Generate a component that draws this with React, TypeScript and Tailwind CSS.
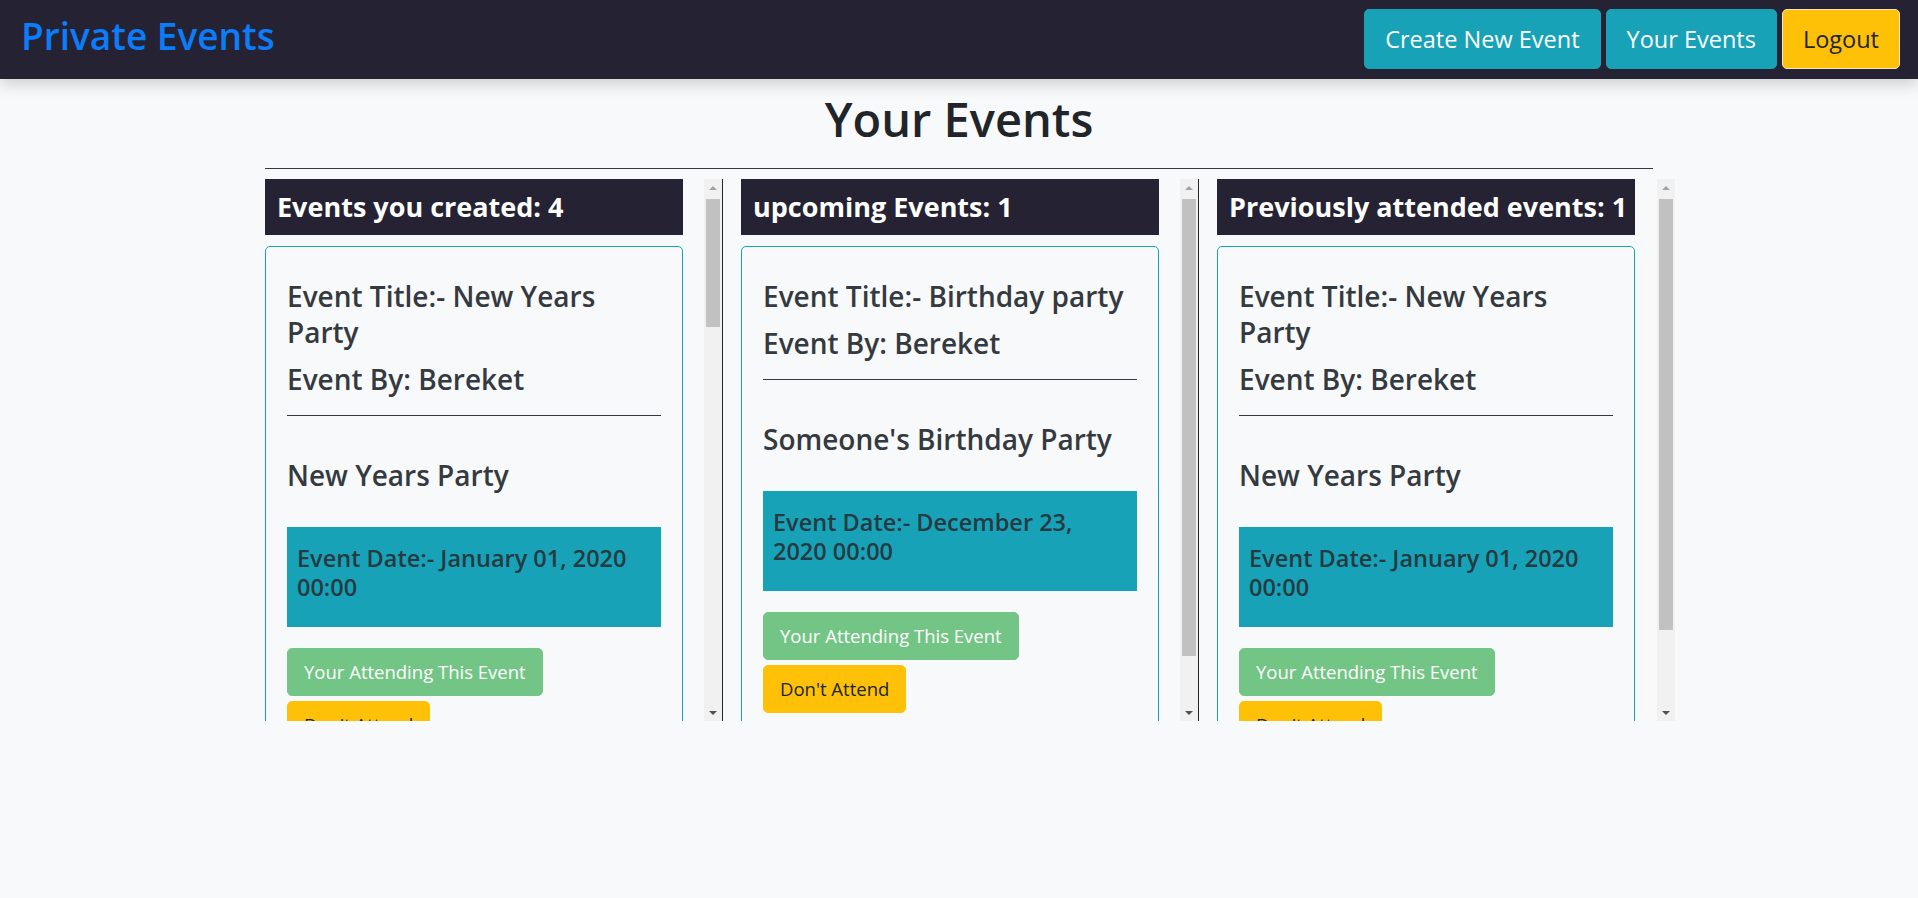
import type React from "react"
import clsx from "clsx"

type EventItem = {
  title: string
  by: string
  description: string
  date: string
}

const newYears: EventItem = {
  title: "New Years Party",
  by: "Bereket",
  description: "New Years Party",
  date: "January 01, 2020 00:00",
}

const birthday: EventItem = {
  title: "Birthday party",
  by: "Bereket",
  description: "Someone's Birthday Party",
  date: "December 23, 2020 00:00",
}

const graduation: EventItem = {
  title: "Graduation",
  by: "Bereket",
  description: "Graduation Celebration",
  date: "July 15, 2020 18:00",
}

const movieNight: EventItem = {
  title: "Movie Night",
  by: "Bereket",
  description: "Watching movies together",
  date: "March 10, 2020 20:00",
}

const EventCard: React.FC<{ event: EventItem }> = ({ event }) => {
  return (
    <div className="mb-[48px] rounded-[5px] border border-[#17a2b8] bg-[#f8f9fa] px-[21px] pt-[31px] pb-[21px] text-[#343a40]">
      <h3 className="mb-[11px] text-[28px] leading-[36px] font-semibold">
        Event Title:- {event.title}
      </h3>
      <h3 className="text-[28px] leading-[36px] font-semibold">
        Event By: {event.by}
      </h3>
      <hr className="mt-[18px] border-t border-[#343a40]" />
      <h3 className="mt-[41px] text-[28px] leading-[36px] font-semibold">
        {event.description}
      </h3>
      <div className="mt-[34px] bg-[#17a2b8] px-[10px] pt-[17px] pb-[25px]">
        <h4 className="text-[23.5px] leading-[29px] font-semibold text-[#263a42]">
          Event Date:- {event.date}
        </h4>
      </div>
      <button
        disabled
        className="mt-[21px] block rounded-[5px] border border-[#73c585] bg-[#73c585] px-4 py-2 text-[18.5px] leading-[30px] text-white"
      >
        Your Attending This Event
      </button>
      <button className="mt-[5px] block rounded-[5px] border border-[#ffc107] bg-[#ffc107] px-4 py-2 text-[18.5px] leading-[30px] text-[#212529]">
        Don't Attend
      </button>
    </div>
  )
}

// classic scrollbar next to each list
const ScrollBar: React.FC<{ thumbCls: string }> = ({ thumbCls }) => {
  return (
    <div className="flex h-full w-[18px] shrink-0 flex-col bg-[#f1f1f1]">
      <div className="flex h-[17px] items-center justify-center">
        <div className="h-0 w-0 border-x-[4px] border-b-[4px] border-x-transparent border-b-[#a3a3a3]" />
      </div>
      <div className="flex-1 px-[2px] pt-[3px]">
        <div className={clsx("bg-[#c1c1c1]", thumbCls)} />
      </div>
      <div className="flex h-[17px] items-center justify-center">
        <div className="h-0 w-0 border-x-[4px] border-t-[4px] border-x-transparent border-t-[#505050]" />
      </div>
    </div>
  )
}

const EventColumn: React.FC<{
  title: string
  events: EventItem[]
  thumbCls: string
  bordered?: boolean
}> = ({ title, events, thumbCls, bordered }) => {
  return (
    <div
      className={clsx(
        "flex h-[542px] w-[458px] shrink-0 justify-between",
        bordered && "border-r border-[#212529]"
      )}
    >
      <div className="w-[418px] shrink-0 overflow-hidden">
        <div className="mb-[11px] flex h-[56px] items-center bg-[#252233] pl-[12px] text-[27px] font-bold text-white">
          {title}
        </div>
        {events.map((ev, i) => (
          <EventCard key={i} event={ev} />
        ))}
      </div>
      <ScrollBar thumbCls={thumbCls} />
    </div>
  )
}

const App: React.FC = () => {
  return (
    <div
      className="min-h-screen bg-[#f8f9fa]"
      style={{ fontFamily: '"Open Sans", "Noto Sans", sans-serif' }}
    >
      <nav className="relative z-10 flex h-[79px] items-center justify-between bg-[#252233] pr-[18px] pl-[21px] shadow-[0_6px_14px_rgba(0,0,0,0.16)]">
        <a href="#" className="mb-[8px] text-[37px] font-semibold text-[#0b7dfa]">
          Private Events
        </a>
        <div className="mb-[2px] flex gap-[5px]">
          <button className="rounded-[5px] border border-[#17a2b8] bg-[#17a2b8] px-5 py-[11px] text-[23.5px] leading-[36px] text-white">
            Create New Event
          </button>
          <button className="rounded-[5px] border border-[#17a2b8] bg-[#17a2b8] px-5 py-[11px] text-[23.5px] leading-[36px] text-white">
            Your Events
          </button>
          <button className="rounded-[5px] border border-[#f3e6c0] bg-[#ffc107] px-5 py-[11px] text-[23.5px] leading-[36px] text-[#212529]">
            Logout
          </button>
        </div>
      </nav>

      <main className="mx-auto w-[1388px]">
        <h1 className="mt-[9px] text-center text-[47px] leading-[62px] font-semibold text-[#212529]">
          Your Events
        </h1>
        <hr className="mt-[18px] border-t border-[#343a40]" />
        <div className="mt-[10px] flex w-max gap-[18px]">
          <EventColumn
            title="Events you created: 4"
            events={[newYears, birthday, graduation, movieNight]}
            thumbCls="h-[128px]"
            bordered
          />
          <EventColumn
            title="upcoming Events: 1"
            events={[birthday]}
            thumbCls="h-[457px]"
            bordered
          />
          <EventColumn
            title="Previously attended events: 1"
            events={[newYears]}
            thumbCls="h-[431px]"
          />
        </div>
      </main>
    </div>
  )
}

export default App
